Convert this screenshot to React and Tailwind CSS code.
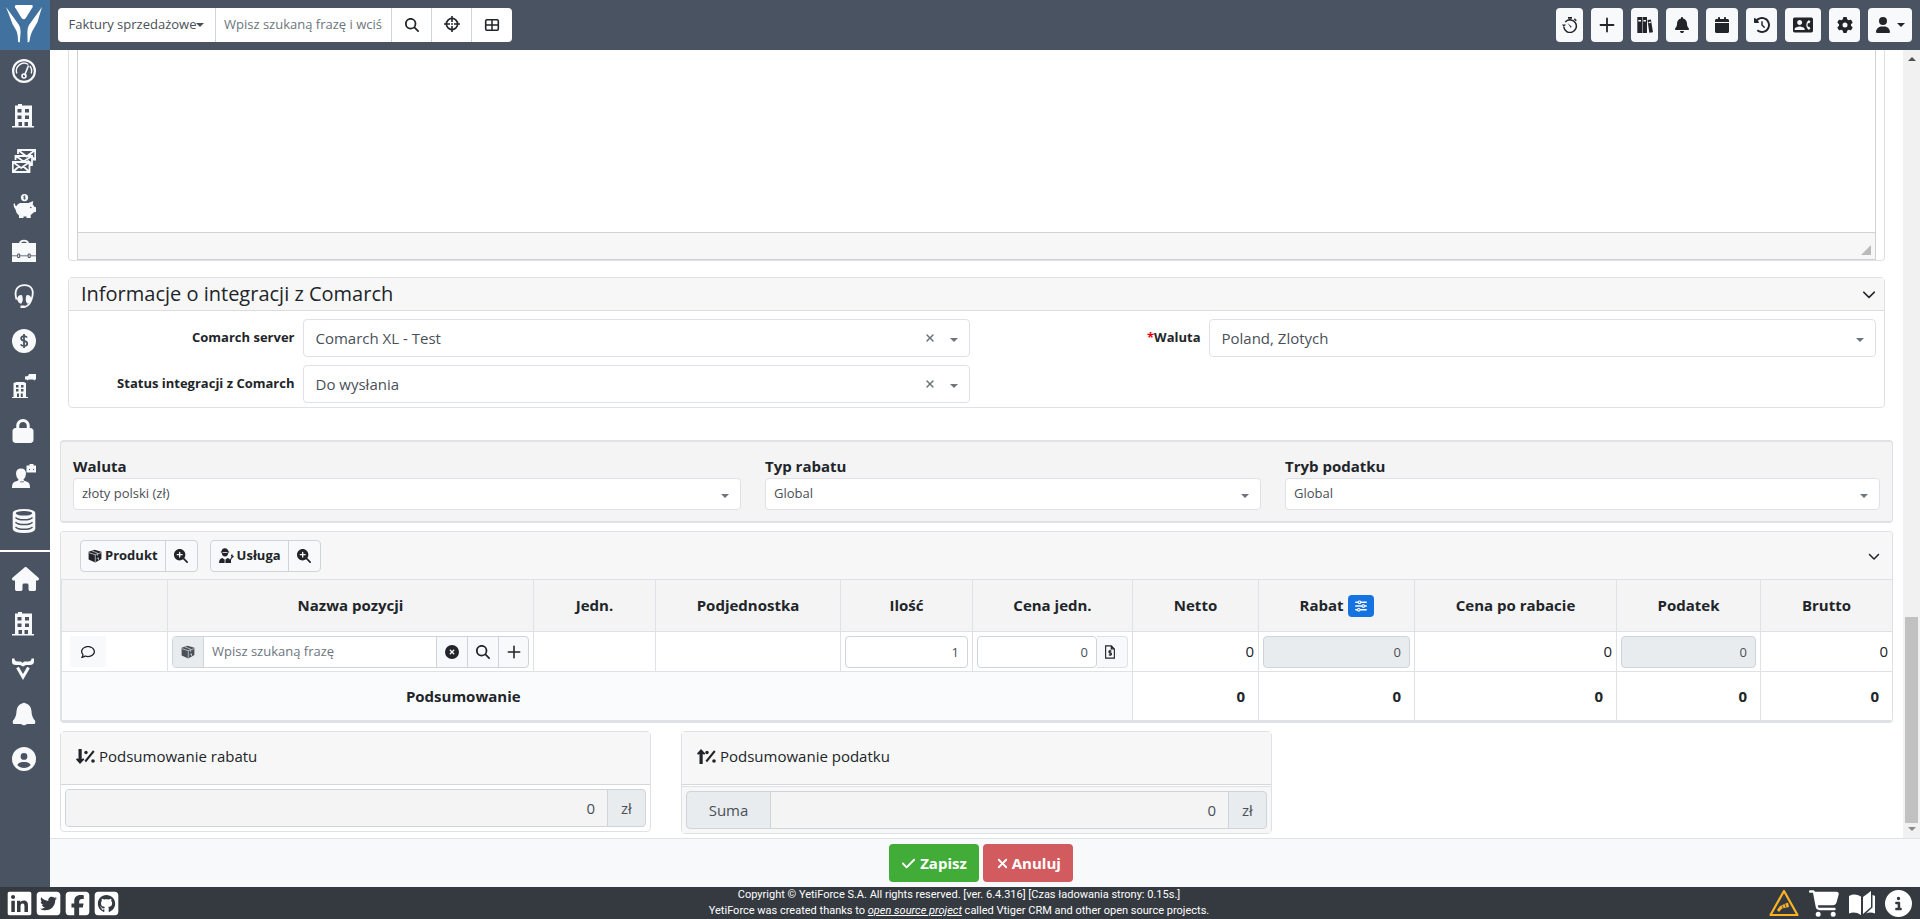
import { useState } from 'react';
import {
    FaBell, FaCalendar, FaCartShopping, FaCheck, FaChevronDown, FaCircleInfo, FaCircleUser, FaCircleXmark,
    FaClockRotateLeft, FaGear, FaHouse, FaLinkedin, FaLock, FaMagnifyingGlass,
    FaMagnifyingGlassPlus, FaRegComment, FaSliders, FaSquareFacebook, FaSquareGithub,
    FaSquareTwitter, FaUser, FaXmark,
} from 'react-icons/fa6';
import { MdContactPhone } from 'react-icons/md';

const Svg = ({ children, className = 'w-6 h-6', box = '0 0 24 24' }) => (
    <svg className={className} viewBox={box} fill="currentColor" aria-hidden="true">
        {children}
    </svg>
);

const Logo = () => (
    <Svg className="w-full h-full" box="0 0 50 50">
        <path d="M16 5h15.500q2 .3 1 2.200l-6.500 10.500q-2.300 3-4.600 0L15 7.200Q14.200 5.300 16 5z" />
        <path d="M6 7l13 18q1.800 3 1.600 7l-.8 10.500-1.800-.8q0-7-1.500-10.700L12.500 24z" />
        <path d="M42 7L29 25q-1.800 3-1.600 7l.2 10.500 1.800-.8q1-7 3-10.700L37.500 22z" />
    </Svg>
);

const PlusIcon = ({ className = 'w-4 h-4' }) => (
    <Svg className={className} box="0 0 16 16">
        <path d="M8 1.500v13M1.500 8h13" stroke="currentColor" strokeWidth="1.800" strokeLinecap="round" />
    </Svg>
);

const TargetIcon = () => (
    <Svg className="w-4 h-4" box="0 0 16 16">
        <circle cx="8" cy="8" r="5.600" fill="none" stroke="currentColor" strokeWidth="1.700" />
        <path d="M8 0v6M8 10v6M0 8h6M10 8h6" stroke="currentColor" strokeWidth="1.600" />
        <circle cx="8" cy="8" r=".9" />
    </Svg>
);

const GridIcon = () => (
    <Svg className="w-4 h-4" box="0 0 16 16">
        <rect x="1.700" y="2.700" width="12.600" height="10.600" rx="1.200" fill="none" stroke="currentColor" strokeWidth="1.600" />
        <path d="M8 2.700v10.600M1.700 8h12.600" stroke="currentColor" strokeWidth="1.500" />
    </Svg>
);

const GaugeIcon = () => (
    <Svg>
        <circle cx="12" cy="12" r="10.900" fill="none" stroke="currentColor" strokeWidth="2.200" />
        <path d="M4.800 14.500a7.700 7.700 0 0 1 11.500-9M17.800 7a7.700 7.700 0 0 1 1.400 7.500" fill="none" stroke="currentColor" strokeWidth="1.400" />
        <path d="M16.500 6.500l-4 10" stroke="currentColor" strokeWidth="1.600" />
        <circle cx="12" cy="17" r="2" fill="none" stroke="currentColor" strokeWidth="1.600" />
    </Svg>
);

const BuildingIcon = () => (
    <Svg>
        <path fillRule="evenodd" d="M5 1.500h1V0h4v1.500h10V22h2v1.500H0V22h3V1.500zM5.500 5v3.500h4V5zm7.500 0v3.500h4V5zm-7.500 6.500V15h4v-3.500zm7.500 0V15h4v-3.500zM6.500 18v4H10v-4zm6 0v4H16v-4z" />
    </Svg>
);

const MailsIcon = () => (
    <Svg>
        <g fill="none" stroke="currentColor" strokeWidth="1.800">
            <path d="M6 5V1h17.200v9.500H21M6 1l8.600 6.500L23.200 1M22 10l-4-4" />
            <path d="M3.500 11V7H20v9h-2.500M4 7l7.500 5.500L20 7M19 15l-3.500-3.500" />
            <path d="M.8 13h16.700v10H.8zM.8 13l8.400 6 8.300-6M.8 23l6-5.500M17.500 23l-6-5.500" />
        </g>
    </Svg>
);

const PiggyIcon = () => (
    <Svg>
        <circle cx="12.500" cy="3.600" r="3.600" />
        <path d="M12.600 1.600v4M11.300 4.500q2 1 2-.2t-1.600-1.300 1.600-1.100" stroke="#495362" fill="none" strokeWidth=".8" />
        <path d="M8 9h8.500l4.800-2-.6 3.400q1.200 1 1.500 2.300l1.800.6v4.400l-2.500.8q-1 1.400-2.800 2.500V24h-4.200v-1.400h-3V24H7v-2.600q-3-2-3.500-6Q1.500 14 1.500 10L3 9.200q-.4 2.500 1.200 3Q5.500 10 8 9z" />
        <circle cx="18.800" cy="13.500" r=".8" fill="#495362" />
    </Svg>
);

const BriefcaseIcon = () => (
    <Svg>
        <path fillRule="evenodd" d="M0 4h7q1-3.200 5-3.200T17 4h7v19H0zm9 0h6q-.8-1.500-3-1.500T9 4z" />
        <path d="M0 16.800h24" stroke="#495362" strokeWidth=".8" />
        <path d="M5.700 15h2v3.500h-2zm10.500 0h2v3.500h-2z" fill="#f8f9fa" stroke="#495362" strokeWidth="1" />
    </Svg>
);

const HeadsetIcon = () => (
    <Svg>
        <path d="M4.500 15.500C1.500 5.500 6 1.200 12.500 1.200S23 5.500 19.500 15.500q-2 6-6.500 7.300H9" fill="none" stroke="currentColor" strokeWidth="1.800" />
        <path d="M5 15q1-4.500 5-3.800 2 4.500-.8 8.600Q6 19 5 15zm14.500 0q-1-4.500-5-3.800-2 4.500.8 8.600 3.200-.8 4.200-4.800z" />
        <path d="M8.500 21.500h4V24h-4z" />
    </Svg>
);

const DollarIcon = () => (
    <Svg>
        <circle cx="12" cy="12" r="12" />
        <path d="M12 5v14M15 8.500q-1-1.500-3.200-1.400-2.700.2-2.700 2.400 0 1.700 3 2.400 3.100.7 3.100 2.700 0 2.300-3 2.500-2.500 0-3.500-1.700" fill="none" stroke="#495362" strokeWidth="1.800" />
    </Svg>
);

const BuildingCarIcon = () => (
    <Svg>
        <path fillRule="evenodd" d="M1.500 9l3-1h7l2.500 1v14h2v1H0v-1h1.500zM4 11v2.500h2.500V11zm5 0v2.500h2.500V11zm-5 4v2.500h2.500V15zm5 0v2.500h2.500V15zm-4 4.500V23h2v-3.500zm3.800 0V23h2v-3.500z" />
        <path d="M13 2.500l3-.5 1-2h7.500v5.500h-1.300l-1 1-1-1h-4.500l-1 1-1-1H13z" />
    </Svg>
);

const UserCaseIcon = () => (
    <Svg>
        <path d="M9 4.500q4.800 0 5 5 0 4-2.600 6.300.2 1.300 3 1.800 3.800.8 3.600 6.400H0q-.2-5.600 3.600-6.400 2.800-.5 3-1.800Q4 13.500 4 9.500q.2-5 5-5z" />
        <path d="M14.500 1.500h3V0h4v1.500h3V8.500h-10z" />
        <path d="M17 5.500h1M21 5.500h1M9 17v1.500M11 17v1.500" stroke="#495362" strokeWidth="1" />
    </Svg>
);

const DatabaseIcon = () => (
    <Svg>
        <path fillRule="evenodd" d="M12 0q11 .3 11.300 4v16q-.8 4-11.300 4T.7 20V4Q1 .3 12 0zm0 2Q4 2.200 3.800 4.200 4.500 6.500 12 6.500t8.200-2.300Q20 2.200 12 2z" />
        <path d="M3.500 8.500q2 2.300 8.500 2.300t8.500-2.300M3.500 13.300q2 2.300 8.500 2.300t8.500-2.300M3.500 18q2 2.300 8.500 2.300t8.500-2.300" fill="none" stroke="#495362" strokeWidth="1.500" />
    </Svg>
);

const BullIcon = () => (
    <Svg>
        <path d="M0 1.500h2.500q0 3 3.500 3h3L10.500 6 12 4.500h4q3.500 0 3.500-3H22V5q-.5 3-4 3h-4l-3 1.500L8 8H4Q0 8 0 5z" />
        <path d="M5.500 10.500l5.500 9.500 5.500-9.500" fill="none" stroke="currentColor" strokeWidth="3" />
    </Svg>
);

const SideBell = () => (
    <Svg>
        <path d="M10 1.500Q12 0 14 1.500 19 3 19.500 9q0 6 3.500 9.500.8 2.500-.5 3.500H15q-3 2.600-6 0H1.500Q.2 21 1 18.500 4.500 15 4.500 9 5 3 10 1.500z" />
    </Svg>
);

const StopwatchIcon = () => (
    <Svg className="w-4 h-4" box="0 0 16 16">
        <path d="M1.800 10a6.300 6.300 0 1 0 2-5.500M8 2.700a6.300 6.300 0 0 0-4.800 2.400" fill="none" stroke="currentColor" strokeWidth="1.500" />
        <path d="M6 0h4v1.800H6zM12.800 1.300l2 2-1 1-2-2zM5.500 6l4.200 3.700-.9 1z" />
        <path d="M0 7.500h4L1.800 10z" />
    </Svg>
);

const BooksIcon = () => (
    <Svg className="w-4 h-4" box="0 0 16 16">
        <path fillRule="evenodd" d="M.3 0h4.700v16H.300zm1 3v1.500H4V3zM5.500 0h4.500v16H5.500zm.9 3v1.500H9V3zM10.500 3l3.400-.6L16 15.200l-3.700.6zm1 2l.2 1.300 2.200-.4-.2-1.300z" />
    </Svg>
);

const BoxIcon = ({ className = 'w-4 h-4' }) => (
    <Svg className={className} box="0 0 16 16">
        <path d="M7.500.8L15.300 3v8.500L8.300 15.300.7 12V3z" />
        <path d="M1 4.200l7.300 2.300L15 4.200M8.300 6.500V15M4.500 2.200l6.500 2.500v3M10 11l2-1v2.500" fill="none" stroke="#cfd3d7" strokeWidth=".9" />
    </Svg>
);

const ServiceIcon = () => (
    <Svg className="w-4 h-4" box="0 0 16 16">
        <path d="M3.500 3.500Q4 0 7 .2q3 .2 3.500 3.300h.7v1h-.9Q10 8.500 7 8.500T3.700 4.500h-.9v-1zM1 15q0-4.500 3.500-5l2.500 2L9.500 10q1.500.3 2.500 1.500l1.500-2.700-.7-1.500 1.500-1.200.2 1.500 1.300.4-.6 1.600-1.200.4-1 2V15z" />
        <path d="M4.500 4.500h5M7 12v3" stroke="#f8f9fa" strokeWidth=".8" />
    </Svg>
);

const PriceFileIcon = () => (
    <Svg className="w-[14px] h-[14px]" box="0 0 16 16">
        <path d="M3 1h6.500L13 4.500V15H3zM9.500 1v3.500H13" fill="none" stroke="currentColor" strokeWidth="1.300" />
        <path d="M9.800 7q-3-1-3.100.6t1.500 1.400 1.500 1.500-3.100.7M8.100 5.400V12.500" fill="none" stroke="currentColor" strokeWidth="1.200" />
    </Svg>
);

const SumIcon = ({ up }) => (
    <Svg className="w-[19px] h-[15px]" box="0 0 19 15">
        {up
            ? <path d="M4 0l4.300 4.500-1 1.300-1.600-.8V15H2.500V5L1 5.800l-1-1.300z" />
            : <path d="M4 15l4.300-4.500-1-1.300-1.600.8V0H2.500v10L1 9.200l-1 1.300z" />}
        <circle cx="10" cy="3.500" r="1.700" />
        <circle cx="17" cy="12" r="1.800" />
        <path d="M17.800 2L9.300 12.500" stroke="currentColor" strokeWidth="2" />
    </Svg>
);

const WarningIcon = () => (
    <Svg className="w-[30px] h-7" box="0 0 30 28">
        <path d="M15 2L28.500 26h-27z" fill="none" stroke="#fbb324" strokeWidth="2.200" strokeLinejoin="round" />
        <path d="M8 21l3-4 8-3.500 1 4.500-7 1.500L10 23z" fill="#fbb324" />
        <path d="M13 16.500l1.200 3M16 15l1 3.500" stroke="#343a40" strokeWidth=".8" />
    </Svg>
);

const BookIcon = () => (
    <Svg className="w-[26px] h-6" box="0 0 26 24">
        <path d="M0 5q6-3 12 .5V24Q6 20 0 22.500zM14 6l8-6v16l-8 7z" />
        <path d="M23.500 4q2 .3 2.500 1v17.500q-5-2-9 0l6.500-6z" />
    </Svg>
);

const menu = [
    ['Pulpit', GaugeIcon], ['Firmy', BuildingIcon], ['Poczta', MailsIcon], ['Sprzedaż', PiggyIcon],
    ['Projekty', BriefcaseIcon], ['Wsparcie', HeadsetIcon], ['Księgowość', DollarIcon], ['Logistyka', BuildingCarIcon],
    ['Bezpieczeństwo', () => <FaLock className="w-[22px] h-6" />], ['Kadry', UserCaseIcon], ['Bazy', DatabaseIcon],
];

const shortcuts = [
    ['Start', () => <FaHouse className="w-[27px] h-6" />], ['Kontrahenci', BuildingIcon], ['Vtiger', BullIcon],
    ['Powiadomienia', SideBell], ['Profil', () => <FaCircleUser className="w-6 h-6" />],
];

const topButtons = [
    ['Czas pracy', 'w-[27px]', <StopwatchIcon />],
    ['Dodaj', 'w-8', <PlusIcon />],
    ['Baza wiedzy', 'w-[27px]', <BooksIcon />],
    ['Powiadomienia', 'w-8', <FaBell className="w-4 h-4" />],
    ['Kalendarz', 'w-8', <FaCalendar className="w-4 h-4" />],
    ['Historia', 'w-[31px]', <FaClockRotateLeft className="w-4 h-4" />],
    ['Kontakty', 'w-9', <MdContactPhone className="w-5 h-5" />],
    ['Ustawienia', 'w-[31px]', <FaGear className="w-4 h-4" />],
];

const Caret = ({ className = '' }) => (
    <span className={`inline-block border-x-4 border-t-4 border-x-transparent ${className}`} />
);

const SideLink = ({ label, icon: Icon }) => (
    <a href="#" aria-label={label} className="h-[45px] pl-3 pb-1 flex items-center text-[#f8f9fa]">
        <Icon />
    </a>
);

const Select = ({ id, value, clearable, small }) => (
    <div className="relative">
        <select
            id={id}
            defaultValue={value}
            className={`w-full appearance-none rounded border border-[#dee2e6] bg-white text-[#495057] ${small ? 'h-8 px-2 text-[13px]' : 'h-[38px] px-3 text-[15px]'}`}
        >
            <option>{value}</option>
        </select>
        {clearable && (
            <button type="button" aria-label="Wyczyść" className="absolute inset-y-0 right-[34px] text-[#6c757d]">
                <FaXmark className="w-3 h-3" />
            </button>
        )}
        <Caret className="absolute right-3 top-1/2 border-t-[#6c757d] pointer-events-none" />
    </div>
);

const Field = ({ id, label, value, clearable, required }) => (
    <div className="flex items-center">
        <label htmlFor={id} className="w-1/4 pr-2 text-right text-[13px] font-bold">
            {required && <span className="text-red-600">*</span>}
            {label}
        </label>
        <div className="flex-1">
            <Select id={id} value={value} clearable={clearable} />
        </div>
    </div>
);

const AddGroup = ({ icon, label }) => (
    <div className="flex h-8 rounded border border-[#ced4da] bg-[#f8f9fa] divide-x divide-[#ced4da]">
        <button type="button" className="flex items-center gap-[3px] px-[7px] text-[13px] font-bold">
            {icon}
            {label}
        </button>
        <button type="button" aria-label={`Szukaj: ${label}`} className="w-[31px] flex items-center justify-center">
            <FaMagnifyingGlassPlus className="w-[14px] h-[14px]" />
        </button>
    </div>
);

const columns = [
    ['', 'w-[106px]'], ['Nazwa pozycji', 'w-[366px]'], ['Jedn.', 'w-[122px]'], ['Podjednostka', 'w-[185px]'],
    ['Ilość', 'w-[132px]'], ['Cena jedn.', 'w-[160px]'], ['Netto', 'w-[126px]'], ['Rabat', 'w-[156px]'],
    ['Cena po rabacie', 'w-[202px]'], ['Podatek', 'w-[144px]'], ['Brutto', 'w-[132px]'],
];

const ItemsTable = () => {
    const [qty, setQty] = useState('1');
    const [price, setPrice] = useState('0');
    const cell = 'border border-[#dee2e6] px-1';
    const total = 'border border-[#dee2e6] px-[13px]';
    const box = 'w-full h-8 rounded-sm border border-[#ced4da] px-2 text-right text-[13px] text-[#495057]';

    return (
        <table className="w-full table-fixed border-collapse text-[15px]">
            <colgroup>
                {columns.map(([name, width]) => <col key={name} className={width} />)}
            </colgroup>
            <thead>
                <tr className="h-[52px] bg-[#f4f4f5]">
                    {columns.map(([name]) => (
                        <th key={name} className={`${cell} font-bold`}>
                            {name}
                            {name === 'Rabat' && (
                                <button type="button" aria-label="Rabat ogólny" className="ml-1 w-[26px] h-[22px] rounded-sm bg-[#1473e0] text-white inline-flex items-center justify-center align-middle">
                                    <FaSliders className="w-3 h-3" />
                                </button>
                            )}
                        </th>
                    ))}
                </tr>
            </thead>
            <tbody>
                <tr className="h-10 text-right">
                    <td className={cell}>
                        <button type="button" aria-label="Komentarz" className="ml-1 w-9 h-[31px] bg-[#f8f9fa] flex items-center justify-center">
                            <FaRegComment className="w-[14px] h-[14px]" />
                        </button>
                    </td>
                    <td className={cell}>
                        <div className="flex h-8 rounded border border-[#ced4da] bg-[#f8f9fa] divide-x divide-[#ced4da] overflow-hidden">
                            <span className="w-[31px] bg-[#e9ecef] text-[#495057] flex items-center justify-center">
                                <BoxIcon className="w-[14px] h-[14px]" />
                            </span>
                            <input type="text" aria-label="Nazwa pozycji" placeholder="Wpisz szukaną frazę" className="flex-1 min-w-0 bg-white px-2 text-[13px] placeholder:text-[#6c757d]" />
                            <button type="button" aria-label="Wyczyść" className="w-[31px] flex items-center justify-center">
                                <FaCircleXmark className="w-[14px] h-[14px]" />
                            </button>
                            <button type="button" aria-label="Szukaj" className="w-[31px] flex items-center justify-center">
                                <FaMagnifyingGlass className="w-[14px] h-[14px]" />
                            </button>
                            <button type="button" aria-label="Dodaj" className="w-[29px] flex items-center justify-center">
                                <PlusIcon className="w-[14px] h-[14px]" />
                            </button>
                        </div>
                    </td>
                    <td className={cell} />
                    <td className={cell} />
                    <td className={cell}>
                        <input type="text" aria-label="Ilość" value={qty} onChange={(e) => setQty(e.target.value)} className={box} />
                    </td>
                    <td className={cell}>
                        <div className="flex">
                            <input type="text" aria-label="Cena jedn." value={price} onChange={(e) => setPrice(e.target.value)} className={box} />
                            <button type="button" aria-label="Cennik" className="w-[31px] shrink-0 pr-1 rounded-r border border-l-0 border-[#dee2e6] bg-[#f8f9fa] flex items-center justify-center">
                                <PriceFileIcon />
                            </button>
                        </div>
                    </td>
                    <td className={cell}>0</td>
                    <td className={cell}>
                        <input type="text" aria-label="Rabat" value="0" readOnly className={`${box} bg-[#e9ecef]`} />
                    </td>
                    <td className={cell}>0</td>
                    <td className={cell}>
                        <input type="text" aria-label="Podatek" value="0" readOnly className={`${box} bg-[#e9ecef]`} />
                    </td>
                    <td className={cell}>0</td>
                </tr>
            </tbody>
            <tfoot>
                <tr className="h-[49px] text-right font-bold">
                    <td className="border border-[#dee2e6] bg-[#fafbfc]" colSpan={6}>
                        <div className="w-3/4 text-center">Podsumowanie</div>
                    </td>
                    <td className={total}>0</td>
                    <td className={total}>0</td>
                    <td className={total}>0</td>
                    <td className={total}>0</td>
                    <td className={total}>0</td>
                </tr>
            </tfoot>
        </table>
    );
};

const SummaryCard = ({ title, up, prefix }) => (
    <section className="rounded border border-[#dee2e6]">
        <h2 className="h-[53px] pl-[15px] pb-1 flex items-center gap-1 border-b border-[#d5d8db] bg-[#f7f7f7] text-[15px]">
            <SumIcon up={up} />
            {title}
        </h2>
        <div className={`p-1 ${prefix ? 'mt-[1px] border-t border-[#dee2e6] bg-[#f7f7f7]' : ''}`}>
            <div className="flex h-[38px] rounded border border-[#ced4da] bg-[#e9ecef] divide-x divide-[#ced4da] overflow-hidden text-[15px] text-[#495057]">
                {prefix && <span className="w-[84px] flex items-center justify-center">{prefix}</span>}
                <input type="text" aria-label={title} value="0" readOnly className="flex-1 min-w-0 bg-[#f4f4f4] px-3 text-right" />
                <span className="w-[37px] flex items-center justify-center">zł</span>
            </div>
        </div>
    </section>
);

const TopBar = () => (
    <header className="h-[50px] shrink-0 flex items-center bg-[#495362]">
        <a href="#" aria-label="YetiForce" className="w-[50px] h-full bg-[#41719e] text-white">
            <Logo />
        </a>
        <div className="ml-2 flex h-[34px] rounded bg-white divide-x divide-[#ced4da] overflow-hidden text-[13px]">
            <button type="button" className="w-[158px] flex items-center justify-center text-[#495057]">
                Faktury sprzedażowe
                <Caret className="border-t-[#495057]" />
            </button>
            <input type="text" aria-label="Szukaj" placeholder="Wpisz szukaną frazę i wciśnij enter" className="w-[176px] px-2 placeholder:text-[#6c757d]" />
            <button type="button" aria-label="Szukaj" className="w-10 flex items-center justify-center">
                <FaMagnifyingGlass className="w-[14px] h-[14px]" />
            </button>
            <button type="button" aria-label="Wyszukiwanie zaawansowane" className="w-10 pb-[2px] flex items-center justify-center">
                <TargetIcon />
            </button>
            <button type="button" aria-label="Widok" className="w-10 flex items-center justify-center">
                <GridIcon />
            </button>
        </div>
        <div className="ml-auto mr-2 flex gap-2 text-[#212529]">
            {topButtons.map(([label, width, icon]) => (
                <button key={label} type="button" aria-label={label} className={`${width} h-[34px] rounded bg-[#f8f9fa] flex items-center justify-center`}>
                    {icon}
                </button>
            ))}
            <button type="button" aria-label="Użytkownik" className="w-11 h-[34px] rounded bg-[#f8f9fa] flex items-center justify-center gap-[6px]">
                <FaUser className="w-4 h-4" />
                <Caret className="border-t-[#212529]" />
            </button>
        </div>
    </header>
);

const Scrollbar = () => (
    <div className="w-[17px] shrink-0 flex flex-col items-center bg-[#f1f1f1] py-[7px]" aria-hidden="true">
        <span className="border-x-4 border-b-4 border-x-transparent border-b-[#505050]" />
        <span className="mt-auto mb-1 w-[13px] h-[206px] bg-[#c1c1c1]" />
        <Caret className="border-t-[#8a8a8a]" />
    </div>
);

const Footer = () => (
    <footer className="h-8 shrink-0 pl-[6px] pr-2 flex items-center bg-[#343a40] text-white">
        <div className="flex-1 flex gap-[2px]">
            <a href="#" aria-label="LinkedIn"><FaLinkedin className="w-[27px] h-[27px]" /></a>
            <a href="#" aria-label="Twitter"><FaSquareTwitter className="w-[27px] h-[27px]" /></a>
            <a href="#" aria-label="Facebook"><FaSquareFacebook className="w-[27px] h-[27px]" /></a>
            <a href="#" aria-label="GitHub"><FaSquareGithub className="w-[27px] h-[27px]" /></a>
        </div>
        <p className="text-center font-[Roboto,sans-serif] text-[11px] leading-4">
            Copyright © YetiForce S.A. All rights reserved. [ver. 6.4.316] [Czas ładowania strony: 0.15s.]
            <br />
            YetiForce was created thanks to <a href="#" className="italic underline">open source project</a> called Vtiger CRM and other open source projects.
        </p>
        <div className="flex-1 flex items-center justify-end gap-[10px]">
            <a href="#" aria-label="Ostrzeżenie"><WarningIcon /></a>
            <a href="#" aria-label="Sklep"><FaCartShopping className="w-[30px] h-[27px]" /></a>
            <a href="#" aria-label="Dokumentacja"><BookIcon /></a>
            <a href="#" aria-label="Informacje"><FaCircleInfo className="w-[27px] h-[27px]" /></a>
        </div>
    </footer>
);

export default function App() {
    return (
        <div className="h-screen flex flex-col bg-white font-['Open_Sans',sans-serif] text-[#212529]">
            <TopBar />
            <div className="flex-1 min-h-0 flex">
                <nav className="w-[50px] shrink-0 bg-[#495362]">
                    <div className="pb-[5px] border-b-2 border-white">
                        {menu.map(([label, icon]) => <SideLink key={label} label={label} icon={icon} />)}
                    </div>
                    <div className="pt-[6px]">
                        {shortcuts.map(([label, icon]) => <SideLink key={label} label={label} icon={icon} />)}
                    </div>
                </nav>
                <form className="flex-1 min-w-0 flex flex-col" onSubmit={(e) => e.preventDefault()}>
                    <div className="flex-1 min-h-0 flex">
                        <main className="flex-1 min-w-0 px-[10px] overflow-hidden">
                            <div className="mx-2">
                                {/* lower part of the description editor */}
                                <section className="px-2 rounded-b border border-t-0 border-[#dee2e6]">
                                    <div className="border-x border-b border-[#d1d1d1]">
                                        <textarea aria-label="Opis" className="block w-full h-[182px] resize-none" />
                                        <div className="h-[27px] flex items-end justify-end p-1 border-t border-[#d1d1d1] bg-[#f7f7f7]">
                                            <span className="border-l-[10px] border-b-[10px] border-l-transparent border-b-[#bababa]" />
                                        </div>
                                    </div>
                                </section>

                                <section className="mt-4 rounded border border-[#dee2e6]">
                                    <header className="h-[33px] pl-3 pr-2 flex items-center justify-between border-b border-[#dcdcdc] bg-[#f7f7f7]">
                                        <h2 className="text-[20px] leading-6 font-medium">Informacje o integracji z Comarch</h2>
                                        <button type="button" aria-label="Zwiń"><FaChevronDown className="w-[14px] h-[14px]" /></button>
                                    </header>
                                    <div className="grid grid-cols-2 gap-x-4 gap-y-2 pl-[11px] pr-2 pt-2 pb-1">
                                        <Field id="server" label="Comarch server" value="Comarch XL - Test" clearable />
                                        <Field id="currency" label="Waluta" value="Poland, Zlotych" required />
                                        <Field id="status" label="Status integracji z Comarch" value="Do wysłania" clearable />
                                    </div>
                                </section>
                            </div>

                            <section className="mt-8 px-3 pt-[14px] pb-[11px] flex gap-6 rounded border-y-2 border-x border-[#dee2e6] bg-[#f4f4f5]">
                                <div className="grow-[668] basis-0">
                                    <label htmlFor="inv-currency" className="mb-[2px] block text-[15px] leading-5 font-bold">Waluta</label>
                                    <Select id="inv-currency" value="złoty polski (zł)" small />
                                </div>
                                <div className="grow-[496] basis-0">
                                    <label htmlFor="discount-type" className="mb-[2px] block text-[15px] leading-5 font-bold">Typ rabatu</label>
                                    <Select id="discount-type" value="Global" small />
                                </div>
                                <div className="grow-[595] basis-0">
                                    <label htmlFor="tax-mode" className="mb-[2px] block text-[15px] leading-5 font-bold">Tryb podatku</label>
                                    <Select id="tax-mode" value="Global" small />
                                </div>
                            </section>

                            <section className="mt-2 rounded border border-b-2 border-[#dee2e6] overflow-hidden">
                                <header className="h-[47px] pl-[19px] pr-3 flex items-center gap-3 bg-[#f7f7f7]">
                                    <AddGroup label="Produkt" icon={<BoxIcon className="w-[14px] h-[14px]" />} />
                                    <AddGroup label="Usługa" icon={<ServiceIcon />} />
                                    <button type="button" aria-label="Zwiń" className="ml-auto"><FaChevronDown className="w-3 h-3" /></button>
                                </header>
                                <ItemsTable />
                            </section>

                            <div className="mt-2 grid grid-cols-3 gap-[30px] items-start">
                                <SummaryCard title="Podsumowanie rabatu" />
                                <SummaryCard title="Podsumowanie podatku" up prefix="Suma" />
                            </div>
                        </main>
                        <Scrollbar />
                    </div>
                    <div className="h-[49px] shrink-0 pr-2 flex items-center justify-center gap-1 border-t border-[#dee2e6] bg-[#f8f9fa] text-[15px] font-bold text-white">
                        <button type="submit" className="h-[38px] px-3 flex items-center gap-1 rounded bg-[#41ad38]">
                            <FaCheck className="w-[15px] h-[15px]" />
                            Zapisz
                        </button>
                        <button type="button" className="h-[38px] px-3 flex items-center gap-[2px] rounded bg-[#d15b5f]">
                            <FaXmark className="w-[15px] h-[15px]" />
                            Anuluj
                        </button>
                    </div>
                </form>
            </div>
            <Footer />
        </div>
    );
}
